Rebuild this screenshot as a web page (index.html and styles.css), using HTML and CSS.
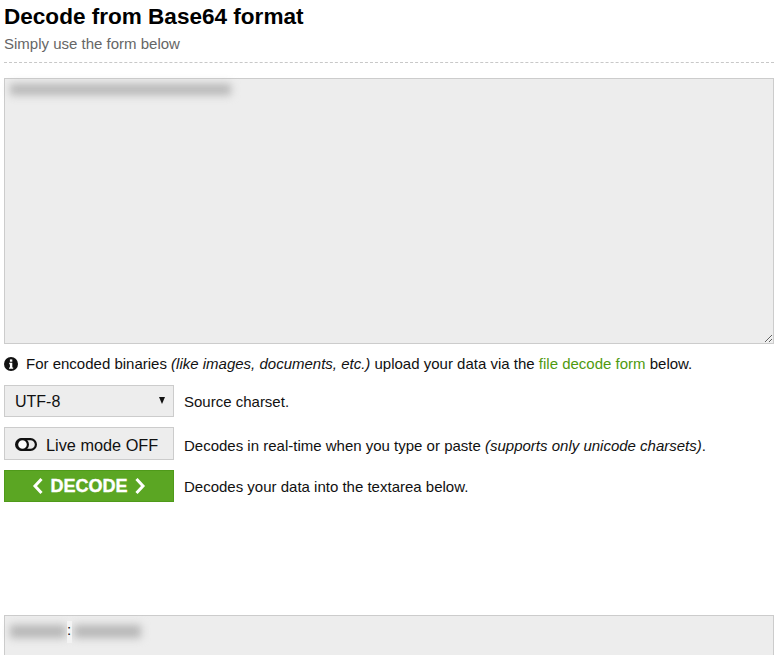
FILE: index.html
```html
<!DOCTYPE html>
<html lang="en">
<head>
  <meta charset="UTF-8" />
  <meta name="viewport" content="width=device-width, initial-scale=1.0" />
  <title>Decode from Base64 format</title>
  <link rel="stylesheet" href="styles.css">
</head>
<body>

  <!-- HEADER -->
  <header class="page-head">
    <h1>Decode from Base64 format</h1>
    <p>Simply use the form below</p>
  </header>

  <!-- SOURCE -->
  <div class="area-wrap">
    <textarea class="area area-source" aria-label="Source"></textarea>
    <div class="blur blur-source"></div>
  </div>

  <p class="info">
    <svg class="info-icon" viewBox="0 0 14 14" width="14" height="14" aria-hidden="true">
      <circle cx="7" cy="7" r="7" fill="#111"/>
      <rect x="5.9" y="2.4" width="2.4" height="2.3" fill="#fff"/>
      <path d="M5.2 5.8h3.1v4.6h.9v1.4H5v-1.4h.9V7.2h-.7z" fill="#fff"/>
    </svg>
    <span>For encoded binaries <em>(like images, documents, etc.)</em> upload your data via the <a href="#">file decode form</a> below.</span>
  </p>

  <!-- OPTIONS -->
  <div class="row">
    <div class="select-wrap">
      <select class="control select" aria-label="Source charset">
        <option>UTF-8</option>
      </select>
    </div>
    <span class="hint">Source charset.</span>
  </div>

  <div class="row">
    <button class="control live" type="button">
      <svg viewBox="0 0 22 13" width="22" height="13" aria-hidden="true">
        <rect x="1.1" y="1.1" width="19.8" height="10.8" rx="5.4" fill="none" stroke="#111" stroke-width="2.2"/>
        <circle cx="7.5" cy="6.5" r="5.4" fill="#fff" stroke="#111" stroke-width="2.2"/>
      </svg>
      <span>Live mode OFF</span>
    </button>
    <span class="hint hint-low">Decodes in real-time when you type or paste <em>(supports only unicode charsets)</em>.</span>
  </div>

  <div class="row">
    <button class="decode" type="button">
      <svg viewBox="0 0 12 18" width="12" height="18" aria-hidden="true"><path d="M9.5 2 3 9l6.5 7" fill="none" stroke="#fff" stroke-width="3"/></svg>
      DECODE
      <svg viewBox="0 0 12 18" width="12" height="18" aria-hidden="true"><path d="M2.5 2 9 9l-6.5 7" fill="none" stroke="#fff" stroke-width="3"/></svg>
    </button>
    <span class="hint">Decodes your data into the textarea below.</span>
  </div>

  <!-- RESULT -->
  <div class="area-wrap result">
    <textarea class="area area-result" aria-label="Result"></textarea>
    <div class="blur blur-left"></div>
    <div class="blur blur-right"></div>
    <span class="colon">:</span>
  </div>

</body>
</html>
```

FILE: styles.css
```css
* {
  box-sizing: border-box;
  margin: 0;
  padding: 0;
}

html, body {
  height: 655px;
  overflow: hidden;
}

body {
  font-family: "Liberation Sans", Arial, sans-serif;
  background: #fff;
  color: #111;
  padding: 0 7px 0 4px;
}

/* --- HEADER --- */
.page-head {
  height: 63px;
  padding-top: 4px;
  border-bottom: 1px dashed #c8c8c8;
}

.page-head h1 {
  font-size: 22.55px;
  line-height: 26px;
  color: #000;
}

.page-head p {
  font-size: 15px;
  line-height: 17px;
  margin-top: 5px;
  color: #666;
}

/* --- TEXTAREAS --- */
.area-wrap {
  position: relative;
  margin-top: 15px;
}

.area {
  display: block;
  width: 100%;
  background: #ededed;
  border: 1px solid #ccc;
  border-radius: 0;
  outline: none;
}

.area-source {
  height: 266px;
}

.area-result {
  height: 120px;
  resize: none;
}

.result {
  margin-top: 113px;
}

.blur {
  position: absolute;
  background: #b6b6b6;
  filter: blur(4.5px);
}

.blur-source {
  top: 6px;
  left: 6px;
  width: 221px;
  height: 11px;
}

.blur-left {
  top: 10px;
  left: 6px;
  width: 56px;
  height: 13px;
}

.blur-right {
  top: 10px;
  left: 70px;
  width: 67px;
  height: 13px;
}

.colon {
  position: absolute;
  top: 6px;
  left: 63px;
  width: 5px;
  height: 22px;
  background: #f3f3f3;
  font-size: 15px;
  line-height: 18px;
}

/* --- INFO --- */
.info {
  display: flex;
  align-items: center;
  gap: 8px;
  font-size: 15px;
  line-height: 17px;
  margin-top: 11px;
}

.info-icon {
  flex: none;
}

.info a {
  color: #4f9a0f;
  text-decoration: none;
}

/* --- ROWS --- */
.row {
  display: flex;
  align-items: center;
  gap: 10px;
  margin-top: 10px;
}

.info + .row {
  margin-top: 13px;
}

.hint {
  font-size: 15px;
}

.hint-low {
  padding-top: 4px;
}

.control {
  width: 170px;
  background: #ededed;
  border: 1px solid #ccc;
  border-radius: 0;
  color: #111;
  font-family: inherit;
  font-size: 16px;
}

.select-wrap {
  position: relative;
  width: 170px;
}

.select-wrap::after {
  content: "";
  position: absolute;
  top: 12px;
  right: 9px;
  border-top: 7px solid #111;
  border-left: 3.5px solid transparent;
  border-right: 3.5px solid transparent;
}

.select {
  display: block;
  height: 32px;
  padding-left: 10px;
  appearance: none;
  -webkit-appearance: none;
}

.live {
  display: flex;
  align-items: center;
  gap: 9px;
  height: 33px;
  padding: 4px 0 0 10px;
  font-size: 16.3px;
}

.live svg {
  margin-top: -3px;
}

.decode {
  display: flex;
  align-items: center;
  justify-content: center;
  gap: 6px;
  width: 170px;
  height: 32px;
  background: #5ba623;
  border: 1px solid #4f9a1a;
  color: #fff;
  font-family: inherit;
  font-size: 18px;
  font-weight: bold;
  -webkit-text-stroke: 0.4px #fff;
}
```
